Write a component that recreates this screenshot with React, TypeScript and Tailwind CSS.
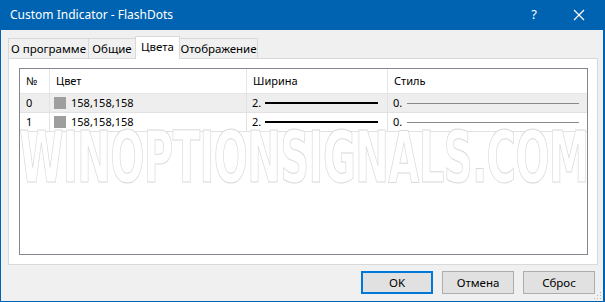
import React from "react";

const font = { fontFamily: '"Noto Sans", "Open Sans", sans-serif' };

function Row({ idx, bg }: { idx: string; bg: string }) {
  return (
    <div className={`flex h-[19px] border-b border-[#e2e2e2] ${bg} text-[11px] text-black`}>
      <div className="w-[30px] border-r border-[#e2e2e2] pl-[6px] flex items-center">{idx}</div>
      <div className="w-[197px] border-r border-[#e2e2e2] pl-[4px] flex items-center gap-[5px]">
        <span className="w-[12px] h-[12px] bg-[#9e9e9e] inline-block" />
        <span>158,158,158</span>
      </div>
      <div className="w-[141px] border-r border-[#e2e2e2] pl-[5px] flex items-center gap-[4px]">
        <span>2.</span>
        <span className="w-[113px] h-[2px] bg-black inline-block" />
      </div>
      <div className="flex-1 pl-[5px] flex items-center gap-[5px]">
        <span>0.</span>
        <span className="w-[172px] h-[1px] bg-[#8a8a8a] inline-block" />
      </div>
    </div>
  );
}

export default function App() {
  return (
    <div
      className="relative w-[605px] h-[302px] bg-[#0063b1] flex flex-col pl-[1px] pr-[2px] pb-[1px] overflow-hidden"
      style={font}
    >
      {/* Title bar */}
      <div className="h-[30px] flex items-center text-white text-[12px] pl-[9px] shrink-0">
        <span className="flex-1">Custom Indicator - FlashDots</span>
        <span className="w-[12px] text-[13px] mr-[33px] text-center">?</span>
        <svg width="12" height="12" viewBox="0 0 12 12" className="mr-[18px]">
          <path d="M1 1 L11 11 M11 1 L1 11" stroke="white" strokeWidth="1.2" fill="none" />
        </svg>
      </div>

      {/* Body */}
      <div className="flex-1 bg-[#f0f0f0] flex flex-col relative">
        {/* Tabs */}
        <div className="flex items-end h-[28px] pl-[7px] text-[11.5px] text-black">
          <div className="w-[80px] h-[20px] flex items-center justify-center border-t border-l border-[#d9d9d9] bg-[#f0f0f0]">
            О программе
          </div>
          <div className="w-[47px] h-[20px] flex items-center justify-center border-t border-l border-[#d9d9d9] bg-[#f0f0f0]">
            Общие
          </div>
          <div className="w-[45px] h-[23px] -mb-[1px] pb-[3px] flex items-center justify-center border-t border-l border-r border-[#d9d9d9] bg-white relative z-10">
            Цвета
          </div>
          <div className="w-[78px] h-[20px] flex items-center justify-center border-t border-r border-[#d9d9d9] bg-[#f0f0f0]">
            Отображение
          </div>
        </div>

        {/* Panel */}
        <div className="ml-[7px] w-[590px] h-[207px] bg-white border border-[#d9d9d9] pt-[9px] pl-[10px] pr-[9px]">
          <div className="h-[187px] border border-[#828790] bg-white">
            <div className="flex h-[25px] border-b border-[#e5e5e5] text-[11px] text-black">
              <div className="w-[30px] border-r border-[#e5e5e5] pl-[6px] flex items-center">№</div>
              <div className="w-[197px] border-r border-[#e5e5e5] pl-[6px] flex items-center">Цвет</div>
              <div className="w-[141px] border-r border-[#e5e5e5] pl-[6px] flex items-center">Ширина</div>
              <div className="flex-1 pl-[6px] flex items-center">Стиль</div>
            </div>
            <Row idx="0" bg="bg-[#eeeeee]" />
            <Row idx="1" bg="bg-white" />
          </div>
        </div>

        {/* Buttons */}
        <div className="flex justify-end gap-[9px] pr-[8px] pt-[6px] text-[11.5px] text-black">
          <button className="w-[72px] h-[23px] bg-[#e1e1e1] border-2 border-[#0078d7] flex items-center justify-center">
            OK
          </button>
          <button className="w-[72px] h-[23px] bg-[#e1e1e1] border border-[#adadad] flex items-center justify-center">
            Отмена
          </button>
          <button className="w-[72px] h-[23px] bg-[#e1e1e1] border border-[#adadad] flex items-center justify-center">
            Сброс
          </button>
        </div>

        {/* Resize grip */}
        <svg width="8" height="8" viewBox="0 0 8 8" className="absolute right-[1px] bottom-[1px]">
          <rect x="6" y="0" width="1" height="1" fill="#b8b8b8" />
          <rect x="3" y="3" width="1" height="1" fill="#b8b8b8" />
          <rect x="6" y="3" width="1" height="1" fill="#b8b8b8" />
          <rect x="0" y="6" width="1" height="1" fill="#b8b8b8" />
          <rect x="3" y="6" width="1" height="1" fill="#b8b8b8" />
          <rect x="6" y="6" width="1" height="1" fill="#b8b8b8" />
        </svg>
      </div>

      {/* Watermark */}
      <div className="absolute left-[22px] top-[125px] w-[563px] h-[64px] flex items-center justify-center pointer-events-none">
        <span
          className="text-white text-[72px] font-bold leading-[52px] whitespace-nowrap scale-x-[0.62] [-webkit-text-stroke:1px_#dadada] tracking-[-1px]"
          style={{ fontFamily: '"DejaVu Sans Condensed", "DejaVu Sans", sans-serif' }}
        >
          WINOPTIONSIGNALS.COM
        </span>
      </div>
    </div>
  );
}
